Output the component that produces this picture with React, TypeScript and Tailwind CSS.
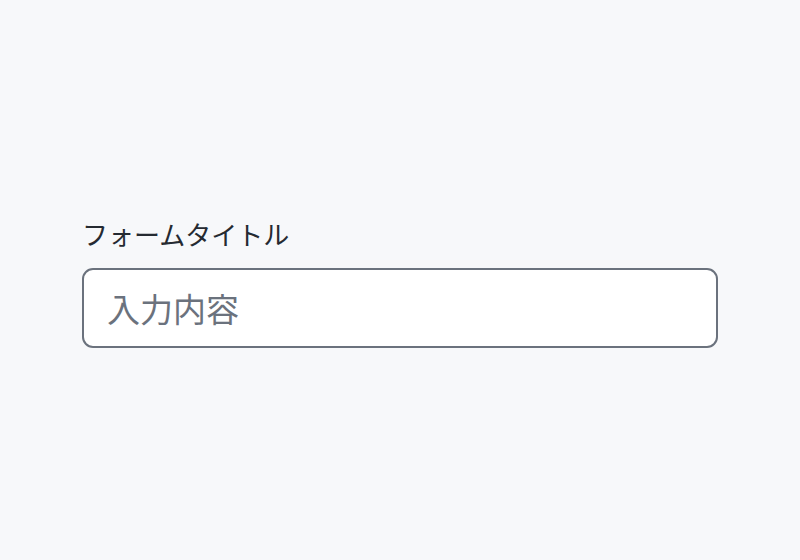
import React from "react";

export default function App() {
  return (
    <div
      className="w-full h-[560px] bg-[#f7f8fa] px-[82px] pt-[216px]"
      style={{ fontFamily: '"Noto Sans CJK JP", "Noto Sans", sans-serif' }}
    >
      <label className="block text-[26px] leading-[36px] text-[#252a31] mb-[16px]">
        フォームタイトル
      </label>
      <input
        type="text"
        placeholder="入力内容"
        className="block w-[636px] h-[80px] rounded-[11px] border-2 border-[#6b727d] bg-white px-[23px] text-[33px] text-[#252a31] placeholder:text-[#6b727d] outline-none"
      />
    </div>
  );
}
